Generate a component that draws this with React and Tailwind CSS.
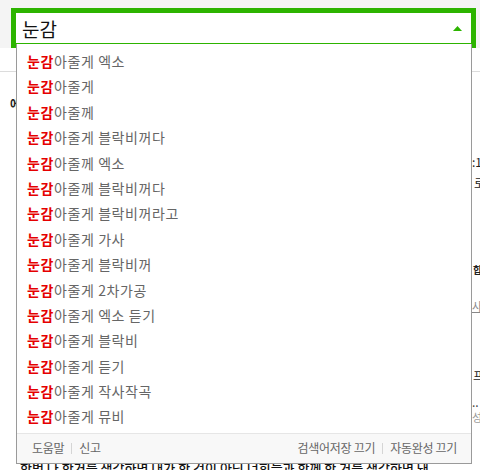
import { useState } from 'react';

const suggestions = [
    ['눈감', '아줄게 엑소'],
    ['눈감', '아줄게'],
    ['눈감', '아줄께'],
    ['눈감', '아줄게 블락비꺼다'],
    ['눈감', '아줄께 엑소'],
    ['눈감', '아줄께 블락비꺼다'],
    ['눈감', '아줄게 블락비꺼라고'],
    ['눈감', '아줄게 가사'],
    ['눈감', '아줄게 블락비꺼'],
    ['눈감', '아줄게 2차가공'],
    ['눈감', '아줄게 엑소 듣기'],
    ['눈감', '아줄게 블락비'],
    ['눈감', '아줄게 듣기'],
    ['눈감', '아줄게 작사작곡'],
    ['눈감', '아줄게 뮤비'],
];

const App = () => {
    const [open, setOpen] = useState(true);

    return (
        <div className="relative w-[480px] h-[470px] overflow-hidden bg-white text-[#333] font-['Noto_Sans_CJK_KR','Noto_Sans',sans-serif]">
            {/* page header with the search box */}
            <div className="h-[48px] bg-[#f4f4f4] pt-[8px] pl-[11px]">
                <div className="w-[465px] h-[40px] border-[5px] border-[#2db400] bg-white flex items-center justify-between">
                    <span className="pl-[6px] text-[19px] leading-none text-[#111]">눈감</span>
                    <button type="button" onClick={() => setOpen(!open)} className="mr-[9px] flex items-center">
                        <svg width="9" height="5" viewBox="0 0 9 5">
                            <path d="M0 5 L4.5 0 L9 5 Z" fill="#2db400" />
                        </svg>
                    </button>
                </div>
            </div>

            {/* page behind the dropdown */}
            <div className="h-[24px] border-b border-[#dcdcdc]" />
            <div className="flex h-[389px]">
                <div className="w-[16px] pl-[10px] pt-[18px] overflow-hidden whitespace-nowrap">
                    <span className="text-[12px] font-bold text-[#222] leading-none">에</span>
                </div>
                <div className="flex-1" />
                <div className="w-[8px] overflow-hidden whitespace-nowrap text-[12px] leading-none">
                    <div className="mt-[84px] text-[#222]">:1</div>
                    <div className="mt-[9px] pl-[2px] text-[#222]">로</div>
                    <div className="mt-[76px] pl-[1px] text-[10px] font-bold text-[#222]">합</div>
                    <div className="mt-[26px] text-[11px] text-[#888] underline">사</div>
                    <div className="mt-[58px] pl-[1px] text-[#222]">프</div>
                    <div className="mt-[14px] text-[#444]">..</div>
                    <div className="mt-[4px] text-[11px] text-[#999]">성ㅅ</div>
                </div>
            </div>
            <div className="pl-[20px] whitespace-nowrap text-[13px] font-medium leading-none text-[#111]">
                한번 나 한거를 생각하면 내가 한 것이 아닌 너희들과 함께 한 거를 생각하면 돼
            </div>

            {/* autocomplete dropdown */}
            {open && (
                <div className="absolute top-[44px] left-[16px] w-[456px] bg-white border border-t-0 border-[#9a9a9a]">
                    <ul className="pt-[5px] pb-[3px]">
                        {suggestions.map(([hit, rest], i) => (
                            <li key={i} className="h-[25.4px] leading-[25.4px] pl-[10px] text-[14px] tracking-[0.6px] whitespace-nowrap">
                                <span className="font-bold text-[#e50000]">{hit}</span>
                                <span className="text-[#666]">{rest}</span>
                            </li>
                        ))}
                    </ul>
                    <div className="h-[30px] border-t border-[#e6e6e6] bg-[#f8f8f8] flex items-center justify-between pl-[15px] pr-[14px] text-[12px] tracking-[-0.3px] text-[#666]">
                        <div className="flex items-center">
                            <span>도움말</span>
                            <span className="mx-[7px] w-px h-[11px] bg-[#d5d5d5]" />
                            <span>신고</span>
                        </div>
                        <div className="flex items-center">
                            <span>검색어저장 끄기</span>
                            <span className="mx-[7px] w-px h-[11px] bg-[#d5d5d5]" />
                            <span>자동완성 끄기</span>
                        </div>
                    </div>
                </div>
            )}
        </div>
    );
};

export default App;
